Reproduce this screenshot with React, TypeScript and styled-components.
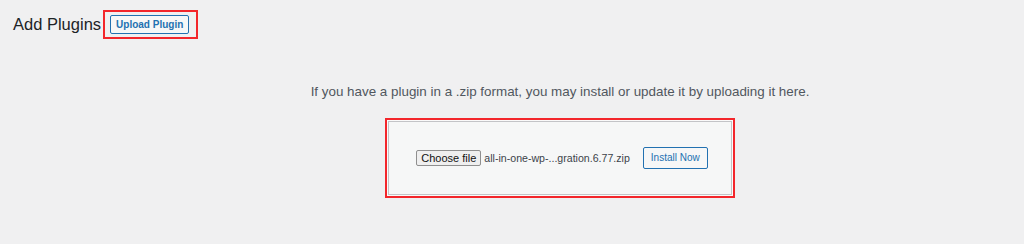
import * as React from 'react';
import styled, { createGlobalStyle } from 'styled-components';

const GlobalStyle = createGlobalStyle`
  html, body {
    margin: 0;
    padding: 0;
    background: #f0f0f1;
  }
  body {
    font-family: "Liberation Sans", Arial, sans-serif;
    color: #3c434a;
  }
`;

const Page = styled.div`
  width: 1024px;
  height: 244px;
  overflow: hidden;
  background: #f0f0f1;
`;

const Header = styled.div`
  display: flex;
  align-items: center;
  padding: 10px 0 0 13px;
  height: 28px;
`;

const Title = styled.h1`
  margin: 0 2px 0 0;
  font-size: 16.5px;
  font-weight: 400;
  color: #1d2327;
  line-height: 28px;
`;

// red annotation frame
const Highlight = styled.div<{ $pad: string }>`
  display: flex;
  align-items: center;
  justify-content: center;
  box-sizing: border-box;
  border: 2px solid #f3262b;
  padding: ${(p) => p.$pad};
`;

const SecondaryButton = styled.button`
  box-sizing: border-box;
  font-family: "Liberation Sans", Arial, sans-serif;
  font-size: 10px;
  font-weight: 600;
  white-space: nowrap;
  color: #2271b1;
  background: #f6f7f7;
  border: 1px solid #2271b1;
  border-radius: 2px;
  padding: 0 5px;
  height: 19px;
  line-height: 17px;
  cursor: pointer;
`;

const UploadSection = styled.div`
  display: flex;
  flex-direction: column;
  align-items: center;
  padding-left: 96px;
`;

const Description = styled.p`
  margin: 45px 0 0;
  font-size: 13.4px;
  line-height: 18px;
  white-space: nowrap;
  color: #50575e;
`;

const UploadFrame = styled(Highlight)`
  margin-top: 17px;
  width: 350px;
  height: 80px;
  background: #fafafa;
`;

const UploadBox = styled.form`
  box-sizing: border-box;
  width: 100%;
  height: 100%;
  display: flex;
  align-items: center;
  justify-content: center;
  background: #f6f7f7;
  border: 1px solid #c3c4c7;
  padding-left: 4px;
  white-space: nowrap;
`;

const ChooseFile = styled.button`
  box-sizing: border-box;
  font-family: "Liberation Sans", Arial, sans-serif;
  font-size: 11px;
  color: #111;
  background: #efefef;
  border: 1px solid #8f8f8f;
  border-radius: 2px;
  height: 16px;
  padding: 0 4px;
  line-height: 14px;
`;

const FileName = styled.span`
  font-size: 10.6px;
  color: #3c434a;
  margin: 0 13px 0 3px;
`;

const InstallButton = styled(SecondaryButton)`
  font-size: 10px;
  font-weight: 400;
  height: 22px;
  padding: 0 7px;
  line-height: 20px;
`;

const App = (): JSX.Element => {
  return (
    <Page>
      <GlobalStyle />
      <Header>
        <Title>Add Plugins</Title>
        <Highlight $pad="3px 7px 3px 5px">
          <SecondaryButton type="button">Upload Plugin</SecondaryButton>
        </Highlight>
      </Header>
      <UploadSection>
        <Description>
          If you have a plugin in a .zip format, you may install or update it by uploading it here.
        </Description>
        <UploadFrame $pad="1px">
          <UploadBox onSubmit={(e) => e.preventDefault()}>
            <ChooseFile type="button">Choose file</ChooseFile>
            <FileName>all-in-one-wp-...gration.6.77.zip</FileName>
            <InstallButton type="submit">Install Now</InstallButton>
          </UploadBox>
        </UploadFrame>
      </UploadSection>
    </Page>
  );
};

export default App;
